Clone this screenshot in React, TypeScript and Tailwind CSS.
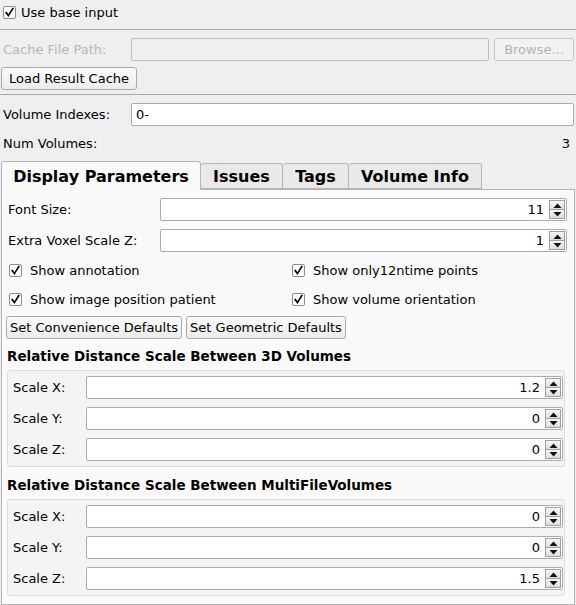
import React from 'react';

const font = { fontFamily: '"DejaVu Sans", sans-serif' };

function Check() {
  return (
    <span className="w-[13px] h-[13px] bg-white border border-[#8e8e8e] rounded-[2px] flex items-center justify-center shrink-0">
      <svg width="11" height="11" viewBox="0 0 11 11">
        <path d="M2.2 5.6 L4.4 8.6 L8.8 1.6" fill="none" stroke="#000" strokeWidth="1.7" strokeLinecap="square" />
      </svg>
    </span>
  );
}

function CheckLabel({ label }: { label: string }) {
  return (
    <div className="flex items-center gap-[8px]">
      <Check />
      <span>{label}</span>
    </div>
  );
}

function Btn({ children, disabled, pad = 'px-[5px]' }: { children: React.ReactNode; disabled?: boolean; pad?: string }) {
  return (
    <button
      className={`h-[23px] ${pad} rounded-[3px] border flex items-center justify-center leading-none ${
        disabled
          ? 'w-full border-[#c6c6c6] bg-[#f2f2f2] text-[#b4b4b4]'
          : 'border-[#a9a9a9] bg-gradient-to-b from-[#fbfbfb] to-[#ececec] text-black'
      }`}
    >
      {children}
    </button>
  );
}

function Spin({ value }: { value: string }) {
  return (
    <div className="flex-1 h-[23px] bg-white border border-[#acacac] rounded-[2px] flex items-stretch">
      <div className="flex-1 flex items-center justify-end pr-[5px]">{value}</div>
      <div className="w-[16px] flex flex-col my-[1px] mr-[1px] border border-[#a0a0a0]">
        <div className="flex-1 flex items-center justify-center bg-gradient-to-b from-[#f6f6f6] to-[#dedede] border-b border-[#a0a0a0]">
          <svg width="9" height="5" viewBox="0 0 9 5"><path d="M0.5 5 L4.5 0.5 L8.5 5 Z" fill="#111" /></svg>
        </div>
        <div className="flex-1 flex items-center justify-center bg-gradient-to-b from-[#f6f6f6] to-[#dedede]">
          <svg width="9" height="5" viewBox="0 0 9 5"><path d="M0.5 0 L4.5 4.5 L8.5 0 Z" fill="#111" /></svg>
        </div>
      </div>
    </div>
  );
}

function ScaleGroup({ values }: { values: string[] }) {
  const labels = ['Scale X:', 'Scale Y:', 'Scale Z:'];
  return (
    <div className="ml-[5px] mr-[9px] border border-[#dcdcdc] rounded-[3px] bg-[#f4f4f4] pl-[5px] pr-[1px] py-[5px] flex flex-col gap-[8px]">
      {labels.map((l, i) => (
        <div key={l} className="flex items-center">
          <span className="w-[73px]">{l}</span>
          <Spin value={values[i]} />
        </div>
      ))}
    </div>
  );
}

export default function App() {
  const tabs = ['Issues', 'Tags', 'Volume Info'];
  const tabW = ['w-[82px]', 'w-[66px]', 'w-[133px]'];
  return (
    <div style={font} className="w-[576px] h-[605px] bg-[#efefef] text-[13px] text-black overflow-hidden flex flex-col">
      <div className="h-[25px] flex items-center pl-[3px] gap-[5px]">
        <Check />
        <span>Use base input</span>
      </div>
      <div className="mt-[4px] h-px bg-[#a9a9a9]" />

      <div className="mt-[8px] flex items-center pl-[3px] pr-[2px]">
        <span className="w-[128px] text-[#b7b7b7]">Cache File Path:</span>
        <div className="flex-1 h-[23px] border border-[#bdbdbd] rounded-[2px] bg-[#efefef]" />
        <div className="ml-[5px] w-[80px] flex">
          <Btn disabled>Browse...</Btn>
        </div>
      </div>
      <div className="mt-[6px] pl-[1px] flex">
        <Btn pad="px-[7px]">Load Result Cache</Btn>
      </div>
      <div className="mt-[4px] h-px bg-[#a9a9a9]" />

      <div className="mt-[8px] flex items-center pl-[3px] pr-[2px]">
        <span className="w-[128px]">Volume Indexes:</span>
        <div className="flex-1 h-[23px] border border-[#acacac] rounded-[2px] bg-white flex items-center px-[4px]">0-</div>
      </div>
      <div className="mt-[8px] h-[20px] flex items-center justify-between pl-[3px] pr-[6px]">
        <span>Num Volumes:</span>
        <span>3</span>
      </div>

      <div className="mt-[6px] h-[29px] flex items-end pl-[1px] relative z-10">
        <div className="w-[200px] h-[29px] bg-[#fafafa] border border-[#b5b5b5] border-b-0 rounded-t-[3px] flex items-center justify-center font-bold text-[16px] -mb-px pt-[1px]">
          Display Parameters
        </div>
        {tabs.map((t, i) => (
          <div
            key={t}
            className={`${tabW[i]} h-[26px] bg-[#e9e9e9] border border-[#b5b5b5] border-l-0 rounded-t-[3px] flex items-center justify-center font-bold text-[16px] pt-[1px]`}
          >
            {t}
          </div>
        ))}
      </div>

      <div className="ml-[1px] mr-[1px] h-[416px] bg-[#fafafa] border border-[#b5b5b5] flex flex-col pt-[8px]">
        <div className="flex items-center pl-[6px] pr-[7px]">
          <span className="w-[152px]">Font Size:</span>
          <Spin value="11" />
        </div>
        <div className="mt-[8px] flex items-center pl-[6px] pr-[7px]">
          <span className="w-[152px]">Extra Voxel Scale Z:</span>
          <Spin value="1" />
        </div>
        <div className="mt-[7px] h-[23px] grid grid-cols-[283px_1fr] items-center pl-[7px]">
          <CheckLabel label="Show annotation" />
          <CheckLabel label="Show only12ntime points" />
        </div>
        <div className="mt-[6px] h-[23px] grid grid-cols-[283px_1fr] items-center pl-[7px]">
          <CheckLabel label="Show image position patient" />
          <CheckLabel label="Show volume orientation" />
        </div>
        <div className="mt-[5px] flex gap-[4px] pl-[4px]">
          <Btn pad="px-[3px]">Set Convenience Defaults</Btn>
          <Btn pad="px-[3px]">Set Geometric Defaults</Btn>
        </div>
        <div className="mt-[7px] h-[20px] flex items-center pl-[5px] font-bold text-[13.5px]">
          Relative Distance Scale Between 3D Volumes
        </div>
        <div className="mt-[4px]">
          <ScaleGroup values={['1.2', '0', '0']} />
        </div>
        <div className="mt-[8px] h-[20px] flex items-center pl-[5px] font-bold text-[13.5px]">
          Relative Distance Scale Between MultiFileVolumes
        </div>
        <div className="mt-[4px]">
          <ScaleGroup values={['0', '0', '1.5']} />
        </div>
      </div>
    </div>
  );
}
